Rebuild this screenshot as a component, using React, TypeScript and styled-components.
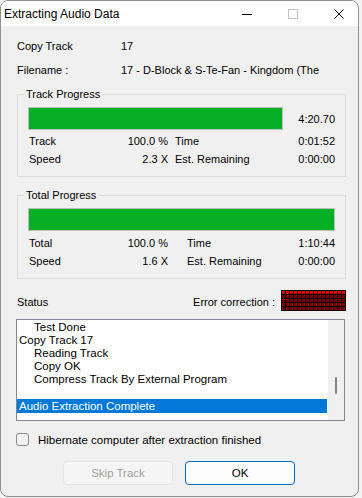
import React from "react";
import styled, { createGlobalStyle } from "styled-components";

const GlobalStyle = createGlobalStyle`
  html, body {
    margin: 0;
    padding: 0;
    background: #f4f4f4;
  }
  body {
    font-family: "Liberation Sans", Arial, sans-serif;
    font-size: 11px;
    color: #000;
  }
`;

const logLines = [
  { text: "Test Done", indent: true },
  { text: "Copy Track 17", indent: false },
  { text: "Reading Track", indent: true },
  { text: "Copy OK", indent: true },
  { text: "Compress Track By External Program", indent: true },
  { text: "", indent: false },
  { text: "Audio Extraction Complete", indent: false, selected: true },
];

const App = () => {
  return (
    <>
      <GlobalStyle />
      <Window>
        <TitleBar>
          <Title>Extracting Audio Data</Title>
          <Controls>
            <ControlButton>
              <svg width="10" height="10" viewBox="0 0 10 10">
                <line x1="0" y1="5.5" x2="10" y2="5.5" stroke="#000" strokeWidth="1" />
              </svg>
            </ControlButton>
            <ControlButton>
              <svg width="10" height="10" viewBox="0 0 10 10">
                <rect x="0.5" y="0.5" width="9" height="9" fill="none" stroke="#c4c4c4" strokeWidth="1" />
              </svg>
            </ControlButton>
            <ControlButton>
              <svg width="10" height="10" viewBox="0 0 10 10">
                <path d="M0.5 0.5 L9.5 9.5 M9.5 0.5 L0.5 9.5" stroke="#000" strokeWidth="1" />
              </svg>
            </ControlButton>
          </Controls>
        </TitleBar>

        <Body>
          <InfoRow>
            <span>Copy Track</span>
            <span>17</span>
          </InfoRow>
          <InfoRow>
            <span>Filename :</span>
            <span>17 - D-Block &amp; S-Te-Fan - Kingdom (The</span>
          </InfoRow>

          <Group>
            <Legend>Track Progress</Legend>
            <GroupInner>
              <BarRow>
                <Bar $width={255}>
                  <Fill style={{ width: "100%" }} />
                </Bar>
                <BarTime>4:20.70</BarTime>
              </BarRow>
              <Stats $gap={7} $top={4}>
                <span>Track</span>
                <Num>100.0 %</Num>
                <span>Time</span>
                <Num>0:01:52</Num>
                <span>Speed</span>
                <Num>2.3 X</Num>
                <span>Est. Remaining</span>
                <Num>0:00:00</Num>
              </Stats>
            </GroupInner>
          </Group>

          <Group>
            <Legend>Total Progress</Legend>
            <GroupInner>
              <BarRow>
                <Bar>
                  <Fill style={{ width: "100%" }} />
                </Bar>
              </BarRow>
              <Stats $gap={19} $top={5}>
                <span>Total</span>
                <Num>100.0 %</Num>
                <span>Time</span>
                <Num>1:10:44</Num>
                <span>Speed</span>
                <Num>1.6 X</Num>
                <span>Est. Remaining</span>
                <Num>0:00:00</Num>
              </Stats>
            </GroupInner>
          </Group>

          <StatusRow>
            <StatusLabel>Status</StatusLabel>
            <StatusLabel>Error correction :</StatusLabel>
            <ErrorGrid>
              {Array.from({ length: 80 }).map((_, i) => (
                <Cell key={i} $lit={i < 16} />
              ))}
            </ErrorGrid>
          </StatusRow>

          <ListBox>
            <Lines>
              {logLines.map((l, i) => (
                <Line key={i} $indent={l.indent} $selected={!!l.selected}>
                  {l.text}
                </Line>
              ))}
            </Lines>
            <ScrollTrack>
              <Thumb />
            </ScrollTrack>
          </ListBox>

          <CheckRow>
            <CheckBox />
            <span>Hibernate computer after extraction finished</span>
          </CheckRow>

          <ButtonRow>
            <Button disabled>Skip Track</Button>
            <Button $primary>OK</Button>
          </ButtonRow>
        </Body>
      </Window>
    </>
  );
};

const Window = styled.div`
  width: 359px;
  height: 497px;
  box-sizing: border-box;
  border: 1px solid #8f8f8f;
  border-radius: 8px;
  overflow: hidden;
  display: flex;
  flex-direction: column;
  background: #f0f0f0;
`;

const TitleBar = styled.div`
  height: 25px;
  display: flex;
  align-items: center;
  background: #ffffff;
  padding-left: 3px;
`;

const Title = styled.div`
  flex: 1;
  font-size: 12px;
`;

const Controls = styled.div`
  display: flex;
  height: 100%;
  margin-right: -4px;
`;

const ControlButton = styled.div`
  width: 46px;
  height: 100%;
  display: flex;
  align-items: center;
  justify-content: center;
`;

const Body = styled.div`
  flex: 1;
  display: flex;
  flex-direction: column;
  padding-top: 13px;
`;

const InfoRow = styled.div`
  display: grid;
  grid-template-columns: 104px 1fr;
  line-height: 14px;
  padding-left: 16px;
  margin-bottom: 10px;
  white-space: nowrap;
`;

const Group = styled.fieldset`
  margin: 0 12px 11px 16px;
  padding: 0;
  border: 1px solid #dcdcdc;
  min-width: 0;
`;

const Legend = styled.legend`
  margin-left: 6px;
  padding: 0 2px;
  line-height: 14px;
`;

const GroupInner = styled.div`
  padding: 6px 10px 10px 10px;
`;

const BarRow = styled.div`
  display: flex;
  align-items: center;
`;

const Bar = styled.div<{ $width?: number }>`
  ${(p) => (p.$width ? `width: ${p.$width}px;` : "flex: 1;")}
  height: 23px;
  box-sizing: border-box;
  border: 1px solid #bcbcbc;
  background: #e6e6e6;
`;

const Fill = styled.div`
  height: 100%;
  background: #06b025;
`;

const BarTime = styled.span`
  margin-left: auto;
`;

const Stats = styled.div<{ $gap: number; $top: number }>`
  display: grid;
  grid-template-columns: 80px 59px ${(p) => p.$gap}px 1fr auto;
  row-gap: 4px;
  margin-top: ${(p) => p.$top}px;
  line-height: 14px;
  padding-left: 1px;

  & > span:nth-child(4n + 3) {
    grid-column: 4;
  }
`;

const Num = styled.span`
  text-align: right;
  white-space: nowrap;
`;

const StatusRow = styled.div`
  display: flex;
  align-items: center;
  height: 21px;
  margin: 0 12px 8px 16px;
`;

const StatusLabel = styled.span`
  padding-top: 2px;
  margin-right: 6px;
  &:first-child {
    flex: 1;
  }
`;

const ErrorGrid = styled.div`
  display: grid;
  grid-template-columns: repeat(16, 3px);
  grid-auto-rows: 3px;
  gap: 1px;
  padding: 1px;
  background: #000;
`;

const Cell = styled.div<{ $lit: boolean }>`
  background: ${(p) => (p.$lit ? "#e00000" : "#7c0000")};
`;

const ListBox = styled.div`
  display: flex;
  height: 102px;
  box-sizing: border-box;
  margin: 0 13px 12px 15px;
  border: 1px solid #828790;
  background: #ffffff;
`;

const Lines = styled.div`
  flex: 1;
  padding-top: 1px;
  font-size: 11.5px;
`;

const Line = styled.div<{ $indent: boolean; $selected: boolean }>`
  height: 13px;
  line-height: 13px;
  padding-left: ${(p) => (p.$indent ? 17 : 2)}px;
  white-space: nowrap;
  ${(p) =>
    p.$selected &&
    `
    background: #0078d7;
    color: #ffffff;
    height: 14px;
    line-height: 14px;
  `}
`;

const ScrollTrack = styled.div`
  width: 16px;
  position: relative;
  background: #f0f0f0;
  border-left: 1px solid #ffffff;
`;

const Thumb = styled.div`
  position: absolute;
  left: 7px;
  top: 57px;
  width: 2px;
  height: 17px;
  border-radius: 1px;
  background: #858585;
`;

const CheckRow = styled.div`
  display: flex;
  align-items: center;
  gap: 9px;
  margin: 0 0 15px 15px;
  font-size: 11.5px;
`;

const CheckBox = styled.div`
  width: 13px;
  height: 13px;
  box-sizing: border-box;
  border: 1px solid #8a8a8a;
  border-radius: 3px;
  background: #f3f3f3;
`;

const ButtonRow = styled.div`
  display: flex;
  gap: 12px;
  padding-left: 62px;
`;

const Button = styled.button<{ $primary?: boolean }>`
  width: 110px;
  height: 24px;
  box-sizing: border-box;
  border-radius: 4px;
  font-family: "Liberation Sans", Arial, sans-serif;
  font-size: 11.5px;
  border: 1px solid ${(p) => (p.$primary ? "#0067c0" : "#e5e5e5")};
  background: ${(p) => (p.$primary ? "#fdfdfd" : "#f5f5f5")};
  color: ${(p) => (p.disabled ? "#a2a2a2" : "#000")};
  padding: 0;
`;

export default App;
